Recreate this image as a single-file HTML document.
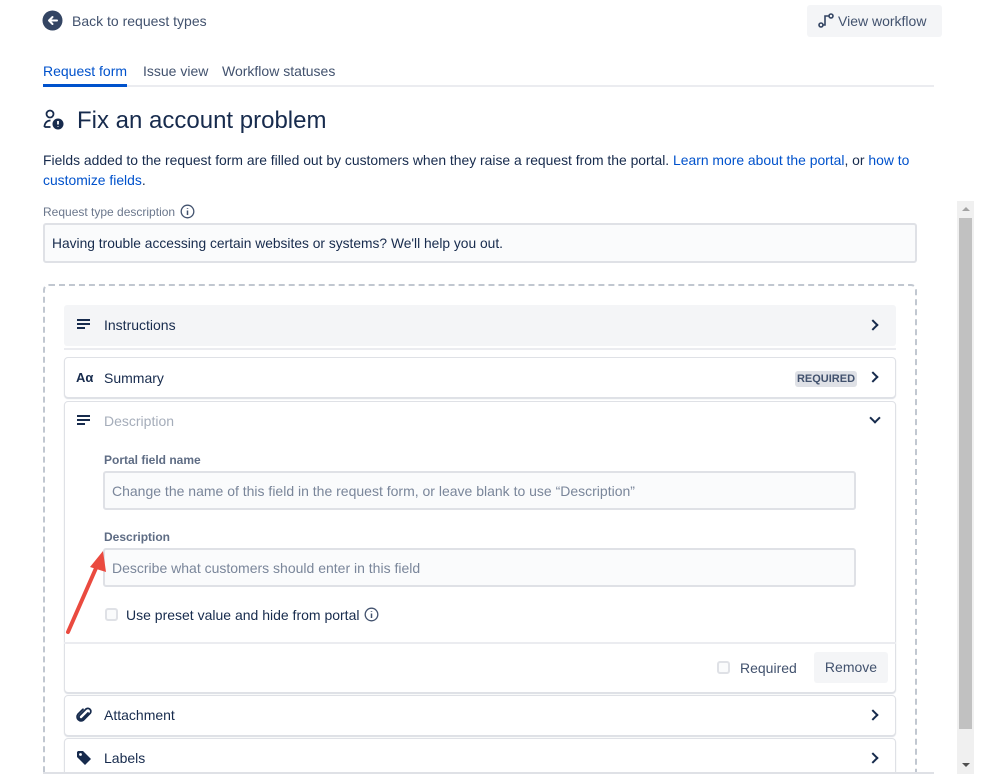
<!DOCTYPE html>
<html style="width:999px;height:784px;overflow:hidden"><head><meta charset="utf-8"><style>
*{box-sizing:border-box;margin:0;padding:0}
body{width:999px;height:784px;overflow:hidden;background:#fff;font-family:"Liberation Sans",sans-serif;color:#172b4d;font-size:14px;position:relative}
.a{position:absolute;white-space:nowrap}
.card{position:absolute;left:64px;width:832px;border:1px solid #dfe1e6;border-radius:4px;background:#fff;box-shadow:0 1px 1px rgba(9,30,66,.15)}
.inp{position:absolute;background:#fafbfc;border:2px solid #dfe1e6;border-radius:3px;color:#7a869a;padding-left:7px;display:flex;align-items:center}
.lbl{font-size:12px;font-weight:bold;color:#6b778c}
.chev{position:absolute;width:8px;height:8px;border-right:2px solid #172b4d;border-bottom:2px solid #172b4d}
.cb{position:absolute;width:13px;height:13px;border:2px solid #dfe1e6;border-radius:3px;background:#fafbfc}
</style></head><body>
<svg class="a" style="left:42px;top:10px" width="21" height="21" viewBox="0 0 21 21"><circle cx="10.5" cy="10.5" r="10" fill="#344563"/><path d="M15 10.5H7M10.5 7L7 10.5l3.5 3.5" stroke="#fff" stroke-width="2" fill="none" stroke-linecap="round" stroke-linejoin="round"/></svg>
<div class="a" style="left:72px;top:13px;color:#42526e">Back to request types</div>
<div class="a" style="left:807px;top:5px;width:135px;height:32px;background:#f4f5f7;border-radius:3px"></div>
<svg class="a" style="left:818px;top:13px" width="16" height="15" viewBox="0 0 16 15"><circle cx="3" cy="12" r="2" fill="none" stroke="#344563" stroke-width="1.6"/><circle cx="13" cy="3" r="2" fill="none" stroke="#344563" stroke-width="1.6"/><path d="M5 12h2V3h4" stroke="#344563" stroke-width="1.6" fill="none"/></svg>
<div class="a" style="left:838px;top:13px;color:#42526e;font-size:14px">View workflow</div>
<div class="a" style="left:43px;top:63px;color:#0052cc">Request form</div>
<div class="a" style="left:143px;top:63px;color:#42526e">Issue view</div>
<div class="a" style="left:222px;top:63px;color:#42526e">Workflow statuses</div>
<div class="a" style="left:43px;top:85px;width:891px;height:2px;background:#ebecf0"></div>
<div class="a" style="left:43px;top:84px;width:84px;height:3px;background:#0052cc"></div>
<svg class="a" style="left:43px;top:109px" width="22" height="22" viewBox="0 0 22 22"><circle cx="7" cy="5" r="3.5" fill="none" stroke="#172b4d" stroke-width="1.8"/><path d="M1.5 18c0-4 2.5-6.5 6-6.5" fill="none" stroke="#172b4d" stroke-width="1.8"/><path d="M1.5 18h6" stroke="#172b4d" stroke-width="1.8"/><circle cx="15" cy="15" r="5.5" fill="#172b4d"/><path d="M15 12v3.5M15 17.5v.5" stroke="#fff" stroke-width="1.8"/></svg>
<div class="a" style="left:77px;top:107px;font-size:24px;color:#172b4d">Fix an account problem</div>
<div class="a" style="left:43px;top:150px;line-height:20px;color:#172b4d;font-size:13.9px">Fields added to the request form are filled out by customers when they raise a request from the portal. <span style="color:#0052cc">Learn more about the portal</span>, or <span style="color:#0052cc">how to</span></div>
<div class="a" style="left:43px;top:170px;line-height:20px;font-size:13.9px"><span style="color:#0052cc">customize fields</span>.</div>
<div class="a lbl" style="left:43px;top:205px;font-weight:normal;color:#6b778c">Request type description</div>
<svg class="a" style="left:180px;top:204px" width="15" height="15" viewBox="0 0 15 15"><circle cx="7.5" cy="7.5" r="6.3" fill="none" stroke="#42526e" stroke-width="1.3"/><path d="M7.5 6.5v4.5M7.5 4v.8" stroke="#42526e" stroke-width="1.5"/></svg>
<div class="inp" style="left:43px;top:223px;width:874px;height:40px;color:#172b4d;font-size:13.8px">Having trouble accessing certain websites or systems? We'll help you out.</div>
<div class="a" style="left:43px;top:284px;width:874px;height:495px;border:2px dashed #c1c7d0;border-bottom:none;border-radius:6px 6px 0 0"></div>
<div class="a" style="left:64px;top:305px;width:832px;height:41px;background:#f4f5f7;border-radius:3px"></div>
<div class="a" style="left:64px;top:348px;width:832px;height:2px;background:#ebecf0"></div>
<svg class="a" style="left:77px;top:319px" width="14" height="12"><path d="M0 1h13M0 5h13M0 9h8" stroke="#172b4d" stroke-width="2"/></svg>
<div class="a" style="left:104px;top:317px;color:#172b4d">Instructions</div>
<div class="chev" style="left:869px;top:321px;transform:rotate(-45deg)"></div>
<div class="card" style="top:357px;height:41px"></div>
<div class="a" style="left:76px;top:370px;font-weight:bold;font-size:13px">Aα</div>
<div class="a" style="left:104px;top:370px">Summary</div>
<div class="a" style="left:795px;top:371px;width:62px;height:16px;background:#dfe1e6;border-radius:3px;font-size:11px;font-weight:bold;color:#42526e;text-align:center;line-height:16px">REQUIRED</div>
<div class="chev" style="left:869px;top:373px;transform:rotate(-45deg)"></div>
<div class="card" style="top:401px;height:292px"></div>
<svg class="a" style="left:77px;top:415px" width="14" height="12"><path d="M0 1h13M0 5h13M0 9h8" stroke="#172b4d" stroke-width="2"/></svg>
<div class="a" style="left:104px;top:413px;color:#a5adba">Description</div>
<div class="chev" style="left:871px;top:414px;transform:rotate(45deg)"></div>
<div class="a lbl" style="left:104px;top:453px;color:#5e6c84">Portal field name</div>
<div class="inp" style="left:103px;top:471px;width:753px;height:39px;font-size:14px">Change the name of this field in the request form, or leave blank to use “Description”</div>
<div class="a lbl" style="left:104px;top:530px;color:#5e6c84">Description</div>
<div class="inp" style="left:103px;top:548px;width:753px;height:39px;font-size:14px">Describe what customers should enter in this field</div>
<div class="cb" style="left:105px;top:608px"></div>
<div class="a" style="left:126px;top:607px;color:#172b4d">Use preset value and hide from portal</div>
<svg class="a" style="left:364px;top:607px" width="15" height="15" viewBox="0 0 15 15"><circle cx="7.5" cy="7.5" r="6.3" fill="none" stroke="#42526e" stroke-width="1.3"/><path d="M7.5 6.5v4.5M7.5 4v.8" stroke="#42526e" stroke-width="1.5"/></svg>
<div class="a" style="left:64px;top:642px;width:832px;height:2px;background:#ebecf0"></div>
<div class="cb" style="left:717px;top:661px"></div>
<div class="a" style="left:740px;top:660px;color:#42526e">Required</div>
<div class="a" style="left:814px;top:652px;width:74px;height:31px;background:#f4f5f7;border-radius:3px;color:#42526e;text-align:center;line-height:31px">Remove</div>
<div class="card" style="top:695px;height:41px"></div>
<svg class="a" style="left:76px;top:707px" width="16" height="16" viewBox="0 0 16 16"><path d="M12 6l-5.5 5.5a2.1 2.1 0 0 1-3-3L10 2a3 3 0 0 1 4.2 4.2L7.5 13a4 4 0 0 1-5.6-5.6L7 2.3" fill="none" stroke="#172b4d" stroke-width="1.8" stroke-linecap="round"/></svg>
<div class="a" style="left:104px;top:707px">Attachment</div>
<div class="chev" style="left:869px;top:711px;transform:rotate(-45deg)"></div>
<div class="card" style="top:738px;height:44px;border-bottom:none"></div>
<svg class="a" style="left:76px;top:750px" width="16" height="16" viewBox="0 0 16 16"><path d="M1 2v5l8 8 6-6-8-8H2z" fill="#172b4d"/><circle cx="4.5" cy="4.5" r="1.4" fill="#fff"/></svg>
<div class="a" style="left:104px;top:750px">Labels</div>
<div class="chev" style="left:869px;top:754px;transform:rotate(-45deg)"></div>
<div class="a" style="left:0;top:774px;width:999px;height:10px;background:#fff"></div>
<div class="a" style="left:43px;top:772px;width:891px;height:2px;background:#dfe1e6"></div>
<div class="a" style="left:957px;top:201px;width:17px;height:573px;background:#f0f0f0"></div>
<div class="a" style="left:959px;top:218px;width:13px;height:511px;background:#c1c1c1"></div>
<div class="a" style="left:962px;top:207px;width:0;height:0;border-left:4px solid transparent;border-right:4px solid transparent;border-bottom:4px solid #a3a3a3"></div>
<div class="a" style="left:962px;top:763px;width:0;height:0;border-left:4px solid transparent;border-right:4px solid transparent;border-top:4px solid #505050"></div>
<svg class="a" style="left:60px;top:545px" width="50" height="95"><path d="M8 87L40 14" stroke="#ea4a3f" stroke-width="4" stroke-linecap="round"/><path d="M43 6L30 22l16 5z" fill="#ea4a3f"/></svg>
</body></html>
